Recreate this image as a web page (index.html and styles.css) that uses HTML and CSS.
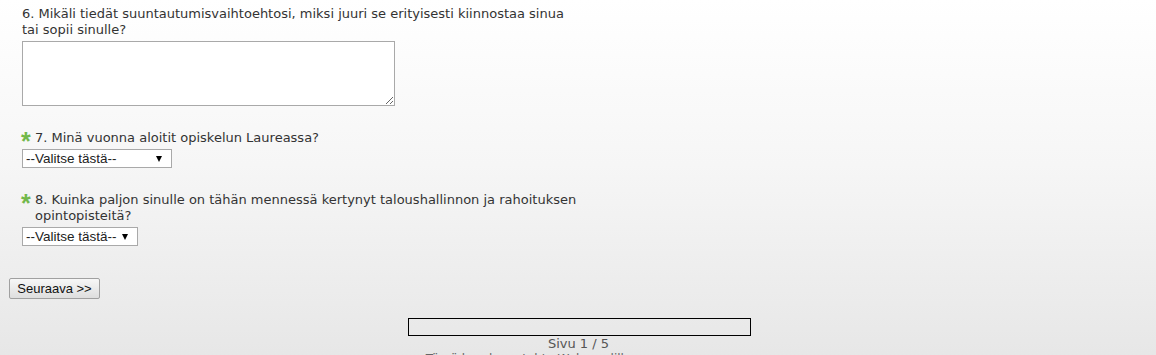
FILE: index.html
```html
<!DOCTYPE html>
<html lang="fi">
<head>
    <meta charset="UTF-8">
    <title>Kysely</title>
    <link rel="stylesheet" href="styles.css">
</head>
<body>
    <form class="survey">
        <div class="question">
            <div class="q-text">6. Mikäli tiedät suuntautumisvaihtoehtosi, miksi juuri se erityisesti kiinnostaa sinua tai sopii sinulle?</div>
            <textarea class="answer-area"></textarea>
        </div>

        <div class="question">
            <div class="q-text"><span class="star">*</span><span class="q-label">7. Minä vuonna aloitit opiskelun Laureassa?</span></div>
            <span class="select-wrap">
                <select class="answer-select wide">
                    <option>--Valitse tästä--</option>
                </select>
            </span>
        </div>

        <div class="question">
            <div class="q-text"><span class="star">*</span><span class="q-label">8. Kuinka paljon sinulle on tähän mennessä kertynyt taloushallinnon ja rahoituksen opintopisteitä?</span></div>
            <span class="select-wrap">
                <select class="answer-select">
                    <option>--Valitse tästä--</option>
                </select>
            </span>
        </div>

        <div class="nav">
            <button type="button" class="next-btn">Seuraava &gt;&gt;</button>
        </div>

        <div class="progress">
            <div class="progress-bar"></div>
            <div class="page-num">Sivu 1 / 5</div>
            <div class="footer-link">Tämä kysely on tehty Webropolilla</div>
        </div>
    </form>
</body>
</html>
```

FILE: styles.css
```css
html {
    min-height: 100%;
    background: linear-gradient(to bottom, #ffffff 0%, #f6f6f6 45%, #e6e6e6 100%);
}

body {
    margin: 0;
    padding: 0 8px 0 9px;
    color: #333;
    font-family: "DejaVu Sans", sans-serif;
    font-size: 13px;
    line-height: 16px;
}

.survey {
    padding-top: 6px;
}

.question {
    padding-left: 13px;
    width: 555px;
    margin-bottom: 24px;
}

.q-text {
    display: flex;
    align-items: flex-start;
}

.star {
    color: #72b84a;
    font-family: "Liberation Sans", Arial, sans-serif;
    font-size: 25px;
    font-weight: bold;
    line-height: 16px;
    width: 13px;
    flex-shrink: 0;
    position: relative;
    top: 3px;
    left: -1px;
}

.answer-area {
    display: block;
    margin: 3px 0 0 0;
    width: 373px;
    height: 65px;
    box-sizing: border-box;
    border: 1px solid #a9a9a9;
    background: #fff;
    resize: both;
}

.select-wrap {
    display: inline-block;
    position: relative;
    margin-top: 3px;
}

/* little black arrow like the old browser select */
.select-wrap::after {
    content: "";
    position: absolute;
    right: 10px;
    top: 7px;
    border-left: 3px solid transparent;
    border-right: 3px solid transparent;
    border-top: 6px solid #000;
    pointer-events: none;
}

.answer-select {
    display: block;
    -webkit-appearance: none;
    appearance: none;
    height: 19px;
    width: 150px;
    border: 1px solid #a9a9a9;
    border-radius: 0;
    background: #fff;
    font-family: "Liberation Sans", Arial, sans-serif;
    font-size: 13.5px;
    color: #222;
    padding: 0 2px 0 3px;
}

.answer-select:not(.wide) {
    width: 116px;
}

.nav {
    margin-top: 32px;
}

.next-btn {
    height: 21px;
    width: 91px;
    padding: 0;
    border: 1px solid #a0a0a0;
    border-radius: 2px;
    background: linear-gradient(to bottom, #f7f7f7, #dedede);
    font-family: "Liberation Sans", Arial, sans-serif;
    font-size: 13px;
    color: #111;
}

.progress {
    margin-top: 19px;
    display: flex;
    flex-direction: column;
    align-items: center;
}

.progress-bar {
    width: 341px;
    height: 16px;
    border: 1px solid #000;
    margin-left: 1px;
}

.page-num {
    color: #555;
    line-height: 16px;
}

.footer-link {
    margin-top: 0;
    color: #666;
    font-size: 12px;
    line-height: 14px;
    margin-right: 100px;
}
```
